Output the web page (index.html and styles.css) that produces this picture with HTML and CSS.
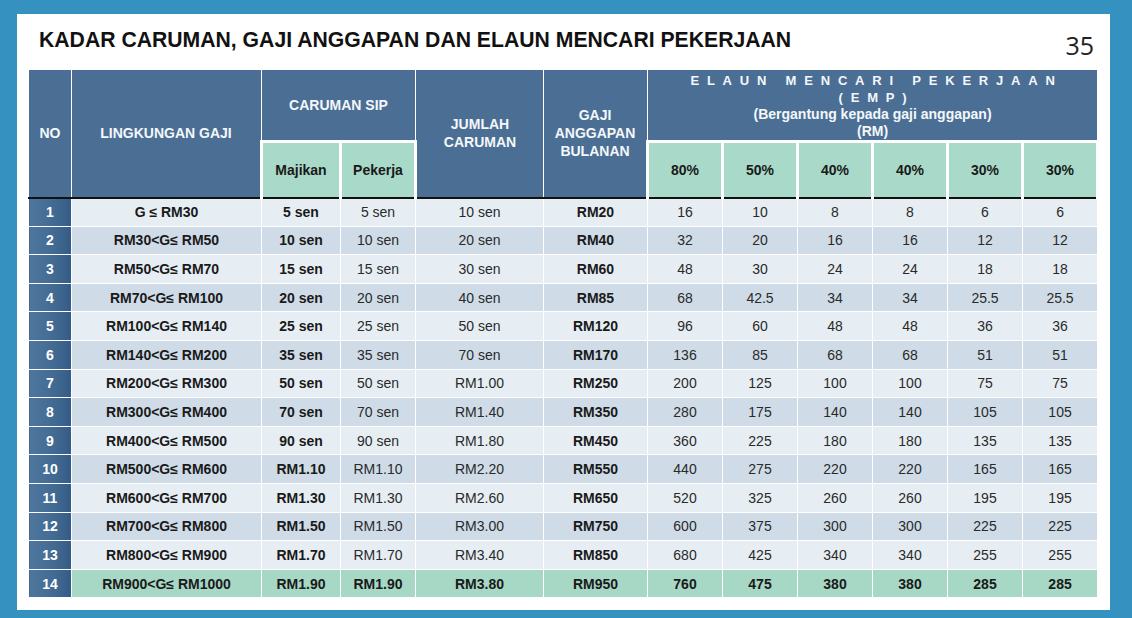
FILE: index.html
```html
<!DOCTYPE html>
<html lang="ms">
<head>
<meta charset="utf-8">
<title>Kadar Caruman</title>
<link rel="stylesheet" href="styles.css">
</head>
<body>
<div class="panel">
  <div class="head">
    <h1 class="title">KADAR CARUMAN, GAJI ANGGAPAN DAN ELAUN MENCARI PEKERJAAN</h1>
    <div class="pageno">35</div>
  </div>
  <table class="grid">
    <colgroup>
      <col class="c-no"><col class="c-ling"><col class="c-maj"><col class="c-pek"><col class="c-jum"><col class="c-gaji">
      <col class="c-p"><col class="c-p"><col class="c-p"><col class="c-p"><col class="c-p"><col class="c-p">
    </colgroup>
    <thead>
      <tr class="h1">
        <th rowspan="2" class="hb">NO</th>
        <th rowspan="2" class="hb">LINGKUNGAN GAJI</th>
        <th colspan="2" class="hb sip">CARUMAN SIP</th>
        <th rowspan="2" class="hb">JUMLAH<br>CARUMAN</th>
        <th rowspan="2" class="hb">GAJI<br>ANGGAPAN<br>BULANAN</th>
        <th colspan="6" class="hb emp">
          <div class="sp">ELAUN MENCARI PEKERJAAN</div>
          <div class="sp">(EMP)</div>
          <div>(Bergantung kepada gaji anggapan)</div>
          <div>(RM)</div>
        </th>
      </tr>
      <tr class="h2">
        <th class="hg">Majikan</th>
        <th class="hg">Pekerja</th>
        <th class="hg">80%</th>
        <th class="hg">50%</th>
        <th class="hg">40%</th>
        <th class="hg">40%</th>
        <th class="hg">30%</th>
        <th class="hg">30%</th>
      </tr>
    </thead>
    <tbody>
      <tr class="ra"><td class="no">1</td><td class="b">G ≤ RM30</td><td class="b">5 sen</td><td>5 sen</td><td>10 sen</td><td class="b">RM20</td><td>16</td><td>10</td><td>8</td><td>8</td><td>6</td><td>6</td></tr>
      <tr class="rb"><td class="no">2</td><td class="b">RM30&lt;G≤ RM50</td><td class="b">10 sen</td><td>10 sen</td><td>20 sen</td><td class="b">RM40</td><td>32</td><td>20</td><td>16</td><td>16</td><td>12</td><td>12</td></tr>
      <tr class="ra"><td class="no">3</td><td class="b">RM50&lt;G≤ RM70</td><td class="b">15 sen</td><td>15 sen</td><td>30 sen</td><td class="b">RM60</td><td>48</td><td>30</td><td>24</td><td>24</td><td>18</td><td>18</td></tr>
      <tr class="rb"><td class="no">4</td><td class="b">RM70&lt;G≤ RM100</td><td class="b">20 sen</td><td>20 sen</td><td>40 sen</td><td class="b">RM85</td><td>68</td><td>42.5</td><td>34</td><td>34</td><td>25.5</td><td>25.5</td></tr>
      <tr class="ra"><td class="no">5</td><td class="b">RM100&lt;G≤ RM140</td><td class="b">25 sen</td><td>25 sen</td><td>50 sen</td><td class="b">RM120</td><td>96</td><td>60</td><td>48</td><td>48</td><td>36</td><td>36</td></tr>
      <tr class="rb"><td class="no">6</td><td class="b">RM140&lt;G≤ RM200</td><td class="b">35 sen</td><td>35 sen</td><td>70 sen</td><td class="b">RM170</td><td>136</td><td>85</td><td>68</td><td>68</td><td>51</td><td>51</td></tr>
      <tr class="ra"><td class="no">7</td><td class="b">RM200&lt;G≤ RM300</td><td class="b">50 sen</td><td>50 sen</td><td>RM1.00</td><td class="b">RM250</td><td>200</td><td>125</td><td>100</td><td>100</td><td>75</td><td>75</td></tr>
      <tr class="rb"><td class="no">8</td><td class="b">RM300&lt;G≤ RM400</td><td class="b">70 sen</td><td>70 sen</td><td>RM1.40</td><td class="b">RM350</td><td>280</td><td>175</td><td>140</td><td>140</td><td>105</td><td>105</td></tr>
      <tr class="ra"><td class="no">9</td><td class="b">RM400&lt;G≤ RM500</td><td class="b">90 sen</td><td>90 sen</td><td>RM1.80</td><td class="b">RM450</td><td>360</td><td>225</td><td>180</td><td>180</td><td>135</td><td>135</td></tr>
      <tr class="rb"><td class="no">10</td><td class="b">RM500&lt;G≤ RM600</td><td class="b">RM1.10</td><td>RM1.10</td><td>RM2.20</td><td class="b">RM550</td><td>440</td><td>275</td><td>220</td><td>220</td><td>165</td><td>165</td></tr>
      <tr class="ra"><td class="no">11</td><td class="b">RM600&lt;G≤ RM700</td><td class="b">RM1.30</td><td>RM1.30</td><td>RM2.60</td><td class="b">RM650</td><td>520</td><td>325</td><td>260</td><td>260</td><td>195</td><td>195</td></tr>
      <tr class="rb"><td class="no">12</td><td class="b">RM700&lt;G≤ RM800</td><td class="b">RM1.50</td><td>RM1.50</td><td>RM3.00</td><td class="b">RM750</td><td>600</td><td>375</td><td>300</td><td>300</td><td>225</td><td>225</td></tr>
      <tr class="ra"><td class="no">13</td><td class="b">RM800&lt;G≤ RM900</td><td class="b">RM1.70</td><td>RM1.70</td><td>RM3.40</td><td class="b">RM850</td><td>680</td><td>425</td><td>340</td><td>340</td><td>255</td><td>255</td></tr>
      <tr class="rg"><td class="no">14</td><td>RM900&lt;G≤ RM1000</td><td>RM1.90</td><td>RM1.90</td><td>RM3.80</td><td>RM950</td><td>760</td><td>475</td><td>380</td><td>380</td><td>285</td><td>285</td></tr>
    </tbody>
  </table>
</div>
</body>
</html>
```
FILE: styles.css
```css
html, body {
  margin: 0;
  padding: 0;
}
body {
  background: #3592c0;
  width: 1132px;
  height: 618px;
  overflow: hidden;
  font-family: "Liberation Sans", Arial, sans-serif;
}
.panel {
  box-sizing: border-box;
  margin: 14px 0 0 17px;
  width: 1093px;
  height: 596px;
  background: #ffffff;
  padding: 14px 13px 0 11px;
}
.head {
  display: flex;
  justify-content: space-between;
  align-items: flex-start;
  height: 41px;
  padding-left: 11px;
  padding-right: 3px;
}
.title {
  margin: 0;
  font-size: 21.2px;
  line-height: 24px;
  font-weight: bold;
  color: #111;
}
.pageno {
  font-family: "Open Sans", "DejaVu Sans", sans-serif;
  font-size: 25px;
  line-height: 32px;
  margin-top: 1px;
  color: #222;
}
.grid {
  table-layout: fixed;
  border-collapse: collapse;
  width: 1069px;
  font-size: 14px;
  color: #1e1e1e;
}
.c-no { width: 43px; }
.c-ling { width: 190px; }
.c-maj { width: 79px; }
.c-pek { width: 75px; }
.c-jum { width: 128px; }
.c-gaji { width: 104px; }
.c-p { width: 75px; }

.grid th, .grid td {
  padding: 0;
  text-align: center;
  vertical-align: middle;
}
.h1 { height: 72px; }
.h2 { height: 56px; }
.hb {
  background: #4b6f94;
  color: #f4f7fa;
  font-weight: bold;
  border: 1px solid #ffffff;
  line-height: 18px;
}
.grid th.emp {
  line-height: 17px;
  font-size: 14px;
  padding-top: 2px;
}
.emp .sp {
  font-size: 13px;
  letter-spacing: 7.8px;
  padding-left: 8px;
}
.hg {
  background: #a9d9c8;
  color: #1a1a1a;
  font-weight: bold;
  border: 3px solid #ffffff;
  border-bottom: 0;
}
.grid tbody tr { height: 28.6px; }
.grid td {
  border: 1px solid #ffffff;
  color: #2a2a2a;
}
.grid tbody tr:first-child td {
  border-top: 2px solid #111111;
}
.ra td { background: #e7eef3; }
.rb td { background: #cfdce7; }
.rg td {
  background: #a7d7c5;
  font-weight: bold;
  color: #1a1a1a;
}
.grid td.b {
  font-weight: bold;
  color: #1a1a1a;
}
.grid td.no {
  background: linear-gradient(to right, #50769c 0%, #416a93 60%, #345b85 100%);
  color: #ffffff;
  font-weight: bold;
}
```
